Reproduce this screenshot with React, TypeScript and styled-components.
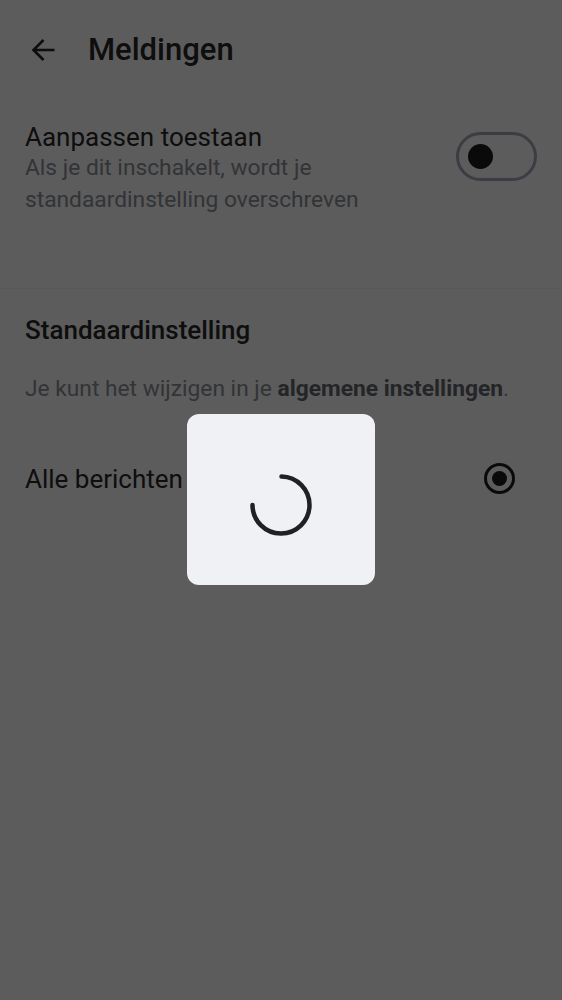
import React from "react";
import styled, { createGlobalStyle } from "styled-components";

const Global = createGlobalStyle`
  html, body { margin: 0; padding: 0; }
  body {
    width: 562px;
    height: 1000px;
    overflow: hidden;
    background: #f1f1f4;
    font-family: Roboto, "Noto Sans", "Liberation Sans", sans-serif;
  }
`;

const Page = styled.div`
  position: relative;
  width: 562px;
  height: 1000px;
  overflow: hidden;
  background: #f1f1f4;
`;

const Header = styled.header`
  display: flex;
  align-items: center;
  height: 100px;
  padding-left: 26px;
  gap: 28px;
`;

const BackButton = styled.button`
  display: flex;
  align-items: center;
  justify-content: center;
  width: 34px;
  height: 34px;
  padding: 0;
  border: 0;
  background: transparent;
  color: #222;
`;

const Title = styled.h1`
  margin: 0;
  font-size: 31px;
  line-height: 40px;
  font-weight: 500;
  color: #262626;
`;

const Section = styled.section<{ $divider?: boolean }>`
  padding: 0 25px;
  border-bottom: ${(p) => (p.$divider ? "1px solid #e4e4e8" : "none")};
`;

const ToggleRow = styled.div`
  display: flex;
  align-items: flex-start;
  justify-content: space-between;
  padding: 22px 0 72px;
`;

const TextBlock = styled.div`
  display: flex;
  flex-direction: column;
`;

const RowTitle = styled.div<{ $weight?: number }>`
  font-size: 26px;
  line-height: 30px;
  color: #262626;
  font-weight: ${(p) => p.$weight ?? 400};
`;

const SubText = styled.div`
  font-size: 22.75px;
  line-height: 32px;
  color: #85888e;
  max-width: 420px;
`;

const Switch = styled.div`
  box-sizing: border-box;
  width: 81px;
  height: 49px;
  margin-top: 10px;
  border: 3px solid #9aa1ad;
  border-radius: 25px;
  display: flex;
  align-items: center;
  padding-left: 9px;
`;

const Knob = styled.div`
  width: 25px;
  height: 25px;
  border-radius: 50%;
  background: #1c1c1c;
`;

const SectionHead = styled.div`
  padding-top: 26px;
`;

const Paragraph = styled.p`
  margin: 28px 0 0;
  font-size: 22.75px;
  line-height: 32px;
  color: #85888e;
  b {
    font-weight: 700;
    color: #5f6268;
  }
`;

const OptionRow = styled.div`
  display: flex;
  align-items: center;
  justify-content: space-between;
  margin-top: 58px;
  padding-right: 22px;
`;

const Radio = styled.div`
  box-sizing: border-box;
  width: 31px;
  height: 31px;
  border-radius: 50%;
  border: 3px solid #1c1c1c;
  display: flex;
  align-items: center;
  justify-content: center;
`;

const RadioDot = styled.div`
  width: 15px;
  height: 15px;
  border-radius: 50%;
  background: #1c1c1c;
`;

const Overlay = styled.div`
  position: absolute;
  inset: 0;
  background: rgba(0, 0, 0, 0.62);
  display: flex;
  justify-content: center;
  align-items: flex-start;
  padding-top: 414px;
`;

const LoaderCard = styled.div`
  width: 188px;
  height: 171px;
  border-radius: 12px;
  background: #f0f1f5;
  display: flex;
  align-items: center;
  justify-content: center;
  padding-top: 11px;
  box-sizing: border-box;
`;

export default function App() {
  return (
    <>
      <Global />
      <Page>
        <Header>
          <BackButton aria-label="Terug">
            <svg width="34" height="34" viewBox="0 0 34 34" fill="none">
              <path
                d="M28.5 17 H7.5 M17.5 7 L7.5 17 L17.5 27"
                stroke="currentColor"
                strokeWidth="2.6"
              />
            </svg>
          </BackButton>
          <Title>Meldingen</Title>
        </Header>
        <Section $divider>
          <ToggleRow>
            <TextBlock>
              <RowTitle>Aanpassen toestaan</RowTitle>
              <SubText>
                Als je dit inschakelt, wordt je standaardinstelling overschreven
              </SubText>
            </TextBlock>
            <Switch>
              <Knob />
            </Switch>
          </ToggleRow>
        </Section>
        <Section>
          <SectionHead>
            <RowTitle $weight={500}>Standaardinstelling</RowTitle>
          </SectionHead>
          <Paragraph>
            Je kunt het wijzigen in je <b>algemene instellingen</b>.
          </Paragraph>
          <OptionRow>
            <RowTitle>Alle berichten</RowTitle>
            <Radio>
              <RadioDot />
            </Radio>
          </OptionRow>
        </Section>
        <Overlay>
          <LoaderCard>
            <svg width="66" height="66" viewBox="0 0 66 66">
              <path
                d="M33.5 4.5 A28.5 28.5 0 1 1 4.5 33"
                fill="none"
                stroke="#1f2125"
                strokeWidth="4.5"
                strokeLinecap="round"
              />
            </svg>
          </LoaderCard>
        </Overlay>
      </Page>
    </>
  );
}
